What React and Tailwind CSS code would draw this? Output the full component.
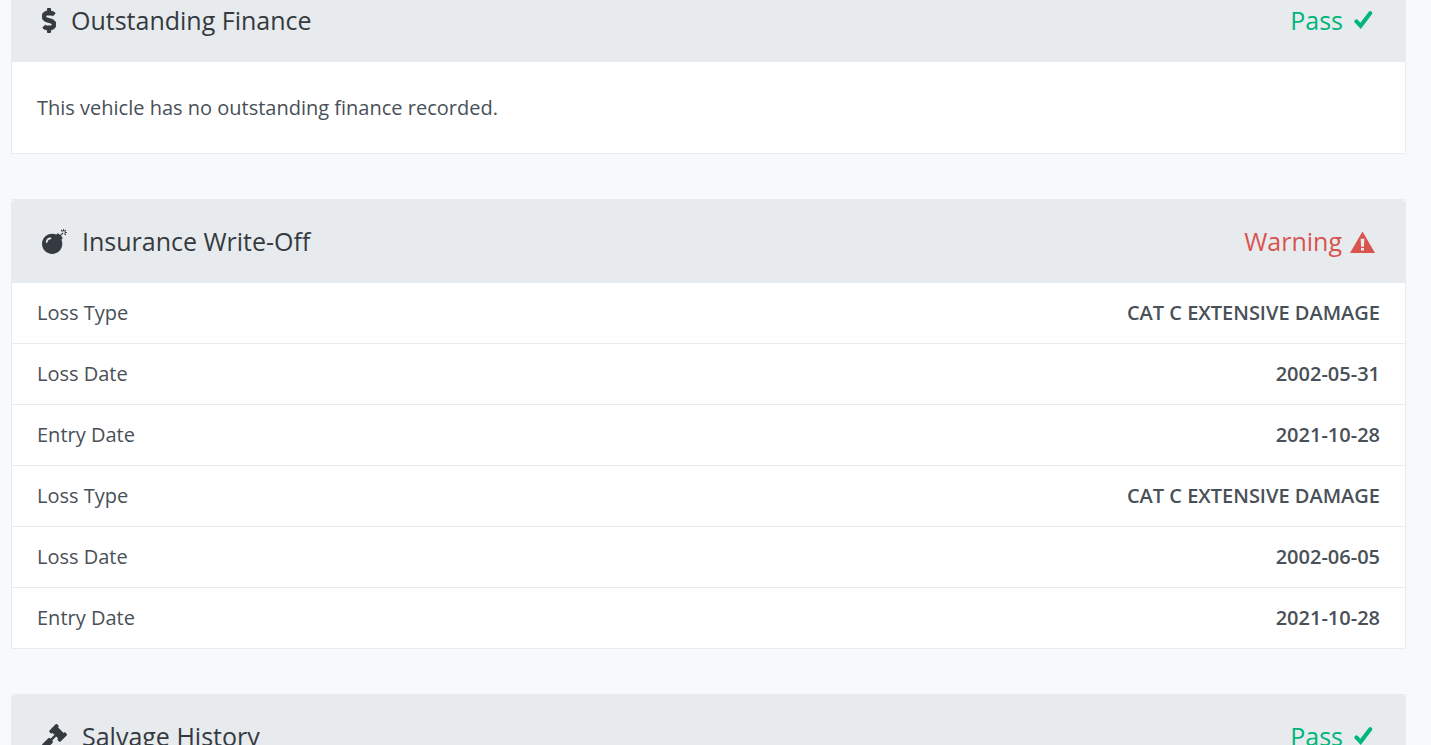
import { FaBomb, FaDollarSign, FaGavel } from 'react-icons/fa'

const WRITE_OFF_ROWS = [
  { label: 'Loss Type', value: 'CAT C EXTENSIVE DAMAGE' },
  { label: 'Loss Date', value: '2002-05-31' },
  { label: 'Entry Date', value: '2021-10-28' },
  { label: 'Loss Type', value: 'CAT C EXTENSIVE DAMAGE' },
  { label: 'Loss Date', value: '2002-06-05' },
  { label: 'Entry Date', value: '2021-10-28' },
]

function CheckIcon() {
  return (
    <svg width="20" height="20" viewBox="0 0 20 20" fill="none" aria-hidden="true">
      <path
        d="M3.4 10.4 L7.6 14.8 L17.2 2.2"
        stroke="currentColor"
        strokeWidth="4"
        strokeLinecap="round"
        strokeLinejoin="miter"
      />
    </svg>
  )
}

function WarningIcon() {
  return (
    <svg width="25" height="25" viewBox="0 0 25 25" fill="currentColor" aria-hidden="true">
      <path
        fillRule="evenodd"
        d="M12.5 2.4 L25 24 H0 Z M10.6 9.8 L11.1 17.8 H13.9 L14.4 9.8 Z M11 19 V21.6 H14 V19 Z"
      />
    </svg>
  )
}

function Status({ passed }) {
  return passed ? (
    <span className="flex items-center gap-[10px] pr-[2px] text-[#00b67a]">
      Pass <CheckIcon />
    </span>
  ) : (
    <span className="flex items-center gap-2 text-[#d9534f]">
      Warning <WarningIcon />
    </span>
  )
}

function CheckCard({ icon, title, passed, children }) {
  return (
    <section className="border border-[#e9ecee] bg-white">
      <header className="flex h-[83px] items-center justify-between rounded-t-[3px] bg-[#e8ebee] px-[30px] text-[25px]">
        <h2 className="flex items-center gap-[15px] text-[#343a40]">
          {icon}
          {title}
        </h2>
        <Status passed={passed} />
      </header>
      {children}
    </section>
  )
}

export default function App() {
  return (
    <main className="h-screen overflow-hidden bg-[#f8f9fb] pr-[25px] pl-[11px] font-['Open_Sans',sans-serif] text-[20px] text-[#495057]">
      {/* the page is scrolled part way into the first card */}
      <div className="-mt-[22px] flex flex-col gap-[45px]">
        <CheckCard
          icon={<FaDollarSign className="h-[25px] w-[14px] stroke-current stroke-[20]" />}
          title="Outstanding Finance"
          passed
        >
          <p className="px-[25px] pt-[31px] pb-[30px] leading-[30px]">
            This vehicle has no outstanding finance recorded.
          </p>
        </CheckCard>

        {/* insurance losses */}
        <CheckCard icon={<FaBomb size={25} />} title="Insurance Write-Off" passed={false}>
          <table className="w-full">
            <tbody>
              {WRITE_OFF_ROWS.map((row, i) => (
                <tr key={i} className="border-b border-[#e9ecef] last:border-b-0">
                  <th scope="row" className="py-[15px] pl-[25px] text-left leading-[30px] font-normal">
                    {row.label}
                  </th>
                  <td className="py-[15px] pr-[25px] text-right leading-[30px] font-semibold">
                    {row.value}
                  </td>
                </tr>
              ))}
            </tbody>
          </table>
        </CheckCard>

        <CheckCard icon={<FaGavel size={25} />} title="Salvage History" passed />
      </div>
    </main>
  )
}
